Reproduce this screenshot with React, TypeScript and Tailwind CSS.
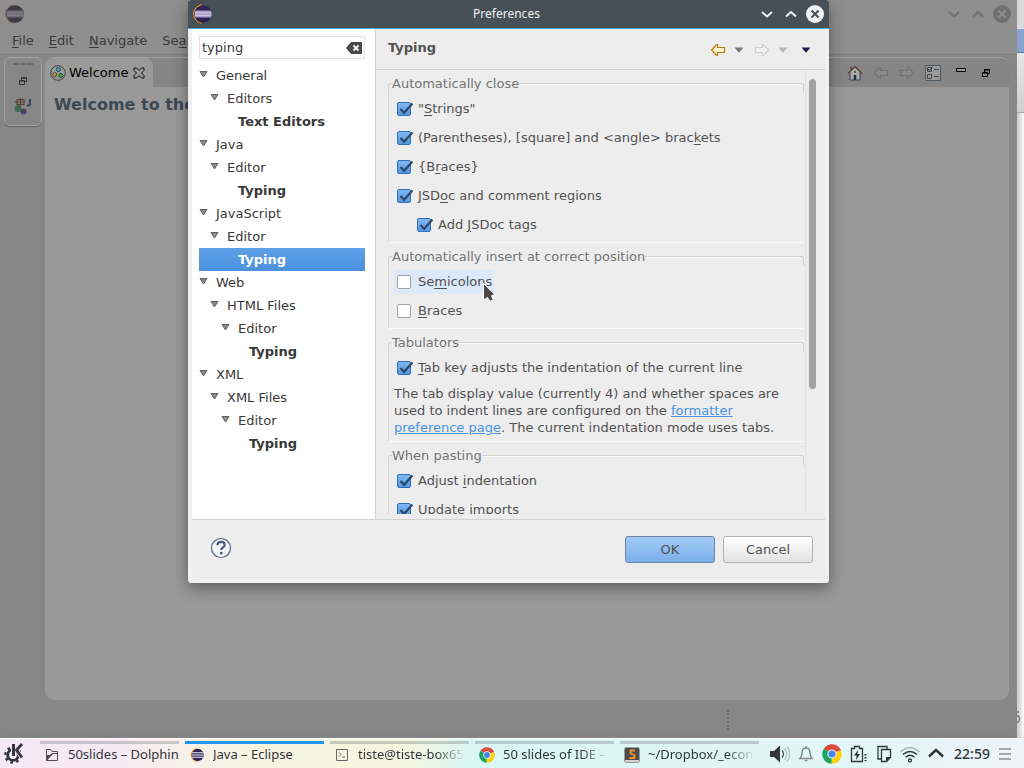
import React, { useState } from "react";

const UI = "font-['DejaVu_Sans',sans-serif]";
const SHELL = "font-['Noto_Sans','Open_Sans',sans-serif]";

function EclipseLogo({ className, small }: { className: string; small?: boolean }) {
  return (
    <svg viewBox="0 0 20 20" className={className} aria-hidden="true">
      <path d="M9.500.8A9.300 9.300 0 0 0 9.500 19.200Q3 16 3 10T9.500.8z" fill="#f7941e" stroke="#f7941e" />
      <circle cx="11" cy="10" r="8.800" fill="#2c2255" />
      {small ? (
        <path d="M3 6.800h16M2.500 10h17M3 13.200h16" stroke="#f3f0f8" strokeWidth="1.500" />
      ) : (
        <g>
          <path d="M3.300 6.500h15.600l.8 3.500-.8 3.500H3.300L2.600 10z" fill="#a79cc8" />
          <path d="M3 8.800h16.500M3 11.300h16.500" stroke="#d5cfe6" strokeWidth="1" />
        </g>
      )}
    </svg>
  );
}

function ChromeLogo({ className }: { className: string }) {
  return (
    <svg viewBox="0 0 20 20" className={className} aria-hidden="true">
      <path d="M10 10L1.800 4.800A9.600 9.600 0 0 1 18.800 6z" fill="#dd4b3e" />
      <path d="M10 10L18.700 6A9.600 9.600 0 0 1 9 19.600z" fill="#fdd20a" />
      <path d="M10 10L9.400 19.600A9.600 9.600 0 0 1 1.800 4.800z" fill="#1da362" />
      <path d="M10 5.600h8.600l.3.900H10z" fill="#b8342a" opacity=".5" />
      <circle cx="10" cy="10" r="4.600" fill="#f4f4f4" />
      <circle cx="10" cy="10" r="3.600" fill="#4385ea" />
    </svg>
  );
}

function WindowButtons({ dim }: { dim?: boolean }) {
  const fg = dim ? "#707070" : "#eff0f1";
  const bg = dim ? "#8f8f8f" : "#475057";
  return (
    <div className="flex items-center gap-1">
      <button type="button" aria-label="Minimize" className="size-5">
        <svg viewBox="0 0 20 20"><path d="M5 8l5 4.500L15 8" fill="none" stroke={fg} strokeWidth="2" /></svg>
      </button>
      <button type="button" aria-label="Maximize" className="size-5">
        <svg viewBox="0 0 20 20"><path d="M5 12.500L10 8l5 4.500" fill="none" stroke={fg} strokeWidth="2" /></svg>
      </button>
      <button type="button" aria-label="Close" className="size-5">
        <svg viewBox="0 0 20 20">
          <circle cx="10" cy="10" r="9" fill={fg} />
          <path d="M6.500 6.500l7 7M13.500 6.500l-7 7" stroke={bg} strokeWidth="2" />
        </svg>
      </button>
    </div>
  );
}

function Arrow({ right, stroke, fill }: { right?: boolean; stroke: string; fill: string }) {
  const d = right
    ? "M1.500 4.500h7v-3h1l5 5.500-5 5.500h-1v-3h-7z"
    : "M14.500 4.500h-7v-3h-1L1.500 7l5 5.500h1v-3h7z";
  return (
    <svg viewBox="0 0 16 14" className="h-3.5 w-4"><path d={d} fill={fill} stroke={stroke} strokeWidth="1.200" /></svg>
  );
}

function Caret({ fill }: { fill: string }) {
  return <svg viewBox="0 0 10 6" className="h-1.5 w-2.5"><path d="M.5.5h9L5 5.800z" fill={fill} /></svg>;
}

function RestoreIcon({ color }: { color: string }) {
  return (
    <svg viewBox="0 0 10 10" className="size-2.5" fill="none" stroke={color} strokeWidth="1">
      <path d="M3.500 4V1.500h5v4H6.500M3 2h6" />
      <path d="M1.500 4.500h5v4h-5zM1 5h6" />
    </svg>
  );
}

const tree: { label: string; level: number; leaf?: boolean; selected?: boolean }[] = [
  { label: "General", level: 0 },
  { label: "Editors", level: 1 },
  { label: "Text Editors", level: 2, leaf: true },
  { label: "Java", level: 0 },
  { label: "Editor", level: 1 },
  { label: "Typing", level: 2, leaf: true },
  { label: "JavaScript", level: 0 },
  { label: "Editor", level: 1 },
  { label: "Typing", level: 2, leaf: true, selected: true },
  { label: "Web", level: 0 },
  { label: "HTML Files", level: 1 },
  { label: "Editor", level: 2 },
  { label: "Typing", level: 3, leaf: true },
  { label: "XML", level: 0 },
  { label: "XML Files", level: 1 },
  { label: "Editor", level: 2 },
  { label: "Typing", level: 3, leaf: true },
];

const indent = ["pl-0", "pl-[11px]", "pl-[22px]", "pl-[33px]"];

function Tree() {
  return (
    <ul className="mt-[5px]" role="tree">
      {tree.map((n, i) => (
        <li
          key={i}
          role="treeitem"
          aria-selected={!!n.selected}
          className={`flex h-[23px] items-center gap-[7px] ${indent[n.level]} ${
            n.selected ? "bg-linear-to-b from-[#5fa1e8] to-[#4b91de] text-white" : "text-[#383838]"
          }`}
        >
          <svg viewBox="0 0 10 8" className="mb-1 h-2 w-2.5 shrink-0">
            {!n.leaf && <path d="M1 1.500h7L4.500 7z" fill="#8c8c8c" stroke="#626262" strokeWidth="1" />}
          </svg>
          <span className={n.leaf ? "font-bold" : ""}>{n.label}</span>
        </li>
      ))}
    </ul>
  );
}

function Check({
  children,
  on,
  nested,
  hover,
}: {
  children: React.ReactNode;
  on?: boolean;
  nested?: boolean;
  hover?: boolean;
}) {
  const [checked, setChecked] = useState(!!on);
  return (
    <div className={`flex h-[29px] items-center ${nested ? "pl-[25px]" : "pl-[5px]"}`}>
      <label className={`flex h-6 items-center gap-[5px] pr-0.5 pl-[3px] whitespace-nowrap ${hover ? "relative bg-[#dce9f9]" : ""}`}>
        <span className="grid size-4">
          <input
            type="checkbox"
            checked={checked}
            onChange={(e) => setChecked(e.target.checked)}
            className="peer [grid-area:1/1] mt-px size-3.5 appearance-none rounded-[2px] border border-[#a3a3a3] bg-white checked:border-[#2f6fb5] checked:bg-linear-to-b checked:from-[#7db7f2] checked:to-[#5597e2]"
          />
          <svg viewBox="0 0 16 16" className="pointer-events-none invisible [grid-area:1/1] peer-checked:visible">
            <path d="M3.500 8l3.600 3.800L15.500 2.500" fill="none" stroke="#2f4662" strokeWidth="2.200" />
          </svg>
        </span>
        <span>{children}</span>
        {hover && (
          <svg viewBox="0 0 14 22" className="absolute top-3 left-[88px] h-[22px] w-3.5">
            <path d="M1.500 1.500v16.500l4-2.500 2.500 4 3.200-1.800-1.700-4L13 12.500z" fill="#4a4a4a" stroke="#fff" strokeWidth="1" />
          </svg>
        )}
      </label>
    </div>
  );
}

function Group({ title, children }: { title: string; children: React.ReactNode }) {
  return (
    <section className="mb-[5px]">
      <div className="flex h-[18px] items-center">
        <span className="mt-2 h-2.5 w-1 shrink-0 rounded-tl-[3px] border-t border-l border-[#d2d2d2]" />
        <h3 className="leading-[18px] whitespace-nowrap text-[#747474]">{title}</h3>
        <span className="mt-2 h-2.5 flex-1 rounded-tr-[3px] border-t border-r border-[#d2d2d2] shadow-[inset_0_1px_0_#fafafa]" />
      </div>
      <div className="border-b border-l border-b-[#fafafa] border-l-[#d6d6d6] pt-px pb-[3px]">{children}</div>
    </section>
  );
}

const U = ({ children }: { children: React.ReactNode }) => (
  <span className="underline underline-offset-2">{children}</span>
);

function Dialog() {
  const [query, setQuery] = useState("typing");
  return (
    <div
      role="dialog"
      aria-label="Preferences"
      className="w-[641px] overflow-hidden rounded-[3px] bg-[#eff0f1] shadow-[0_5px_16px_rgba(0,0,0,0.4)]"
    >
      <header className={`flex h-[29px] items-center border-b border-[#3daee9] bg-[#475057] pr-1 pl-1 ${SHELL}`}>
        <div className="w-16"><EclipseLogo className="size-5" /></div>
        <h1 className="flex-1 text-center text-xs text-[#eff0f1]">Preferences</h1>
        <WindowButtons />
      </header>

      <div className="mx-1 bg-[#ededed]">
        <div className="flex h-[490px]">
          <aside className="w-[184px] border-r border-[#d2d2d2] bg-white px-[7px] pr-2.5 pt-[7px] text-[#383838]">
            <div className="flex h-[23px] items-center border border-[#e0e0e0] pr-0.5 pl-0.5">
              <input
                aria-label="Filter"
                value={query}
                onChange={(e) => setQuery(e.target.value)}
                className="min-w-0 flex-1 bg-transparent outline-none"
              />
              <button type="button" aria-label="Clear" onClick={() => setQuery("")}>
                <svg viewBox="0 0 16 12" className="h-3 w-4">
                  <path d="M0 6l5-6h11v12H5z" fill="#4a4a4a" />
                  <path d="M7.500 3.500l5 5M12.500 3.500l-5 5" stroke="#fff" strokeWidth="1.800" />
                </svg>
              </button>
            </div>
            <Tree />
          </aside>

          <main className="flex min-w-0 flex-1 flex-col text-[#525252]">
            <div className="flex h-[41px] shrink-0 items-center border-b border-[#d2d2d2] pr-3.5 pl-3">
              <h2 className="flex-1 pb-0.5 font-bold">Typing</h2>
              <div className="flex items-center pt-0.5">
                <button type="button" aria-label="Back" className="mr-2"><Arrow stroke="#b9770e" fill="#fff6c9" /></button>
                <button type="button" aria-label="Back history" className="mr-2.5"><Caret fill="#787878" /></button>
                <button type="button" aria-label="Forward" className="mr-2"><Arrow right stroke="#cfcfcf" fill="#f1f1f1" /></button>
                <button type="button" aria-label="Forward history" className="mr-[13px]"><Caret fill="#b5b5b5" /></button>
                <button type="button" aria-label="View menu"><Caret fill="#2a1a4a" /></button>
              </div>
            </div>

            <div className="flex h-[444px] overflow-hidden pr-2 pl-3">
              <div className="min-w-0 flex-1 pt-[5px]">
                <Group title="Automatically close">
                  <Check on>"<U>S</U>trings"</Check>
                  <Check on>(Parentheses), [square] and &lt;angle&gt; brac<U>k</U>ets</Check>
                  <Check on>{"{B"}<U>r</U>{"aces}"}</Check>
                  <Check on>JSD<U>o</U>c and comment regions</Check>
                  <Check on nested>Add <U>J</U>SDoc tags</Check>
                </Group>
                <Group title="Automatically insert at correct position">
                  <Check hover>Se<U>m</U>icolons</Check>
                  <Check><U>B</U>races</Check>
                </Group>
                <Group title="Tabulators">
                  <Check on><U>T</U>ab key adjusts the indentation of the current line</Check>
                  <p className="mt-[3px] mb-0.5 pl-[5px] leading-[17px]">
                    The tab display value (currently 4) and whether spaces are used to indent lines are configured on the{" "}
                    <a href="#formatter" className="text-[#4a93e0] underline underline-offset-1">formatter preference page</a>. The current
                    indentation mode uses tabs.
                  </p>
                </Group>
                <Group title="When pasting">
                  <Check on>Adjust <U>i</U>ndentation</Check>
                  <Check on><U>U</U>pdate imports</Check>
                </Group>
              </div>
              <div className="ml-px w-3 border-l border-[#e2e2e2] pt-[9px] pl-[3px]">
                <div className="h-[310px] w-[7px] rounded-full bg-[#a2a2a2]" />
              </div>
            </div>
          </main>
        </div>

        <footer className="flex h-[60px] items-center border-t border-[#d2d2d2] pr-3 pl-[18px] text-[#525252]">
          <button type="button" aria-label="Help" className="mb-1 size-[22px]">
            <svg viewBox="0 0 22 22">
              <circle cx="11" cy="11" r="9.500" fill="#f3f4f7" stroke="#56648a" strokeWidth="1.200" />
              <path d="M7.500 8.300c0-4.600 7.200-4.200 7.200-.4 0 2.600-3.500 2.500-3.500 5.100" fill="none" stroke="#4b5a84" strokeWidth="2.200" />
              <circle cx="11.200" cy="16.200" r="1.400" fill="#4b5a84" />
            </svg>
          </button>
          <div className="ml-auto flex gap-2">
            <button type="button" className="h-[27px] w-[90px] rounded-[3px] border border-[#6d87a8] bg-linear-to-b from-[#a3cbf6] to-[#79aee9]">OK</button>
            <button type="button" className="h-[27px] w-[90px] rounded-[3px] border border-[#b0b0b0] bg-linear-to-b from-white to-[#e2e2e2]">Cancel</button>
          </div>
        </footer>
      </div>
      <div className="h-1" />
    </div>
  );
}

function Workbench() {
  return (
    <div className="flex flex-1 flex-col rounded-t-[3px] bg-[#8b8b8b] shadow-[inset_0_-3px_3px_#777]">
      <header className="flex h-7 items-center justify-between bg-[#8f8f8f] pr-[5px] pl-1">
        <div className="opacity-70 grayscale-[40%] brightness-60"><EclipseLogo className="size-5" /></div>
        <WindowButtons dim />
      </header>
      <nav className="flex h-[27px] items-center gap-[15px] border-b border-[#7f7f7f] bg-[#8f8f8f] pl-3 text-[#3a3a3a]">
        <a href="#file"><U>F</U>ile</a>
        <a href="#edit"><U>E</U>dit</a>
        <a href="#navigate"><U>N</U>avigate</a>
        <a href="#search">Se<U>a</U>rch</a>
      </nav>

      <div className="flex flex-1 gap-[3px] bg-[#868686]/90 pt-0.5 pr-2 pl-1">
        <aside className="flex h-[69px] w-[38px] flex-col items-center rounded-md border border-[#a5a5a5] bg-[#878787] pt-[5px] shadow-[0_1px_1px_#666]">
          <span className="h-0.5 w-5 border-t-2 border-dashed border-[#666]" />
          <button type="button" aria-label="Restore" className="mt-[11px]"><RestoreIcon color="#333" /></button>
          <button type="button" aria-label="Java browsing" className="mt-3">
            <svg viewBox="0 0 18 17" className="h-[17px] w-[18px]">
              <path d="M3 1.500h7v5H3zM1 4h10M6.500 0v8" fill="none" stroke="#5d4034" strokeWidth="1.200" />
              <path d="M16 1v5q0 2-3 1.500" fill="none" stroke="#33475c" strokeWidth="2" />
              <circle cx="4" cy="10.500" r="3.500" fill="#3c6b4d" />
              <circle cx="9.500" cy="13.500" r="3" fill="#4a4267" />
            </svg>
          </button>
        </aside>

        <main className="mb-[38px] flex flex-1 flex-col overflow-hidden rounded-[9px] border-t border-[#a2a2a2] bg-[#999]">
          <div className="flex h-[29px] items-stretch bg-[#858585]">
            <div className="flex items-center gap-[3px] rounded-tr-lg rounded-tl-lg bg-[#999] pr-2 pl-[5px] text-black">
              <svg viewBox="0 0 16 16" className="size-4">
                <circle cx="8" cy="8" r="7.300" fill="#9b9b9b" stroke="#3c4144" />
                <circle cx="8.500" cy="4.500" r="2.100" fill="#5d96a9" stroke="#24515f" />
                <circle cx="4.700" cy="9.500" r="2.100" fill="#a4955a" stroke="#5f5321" />
                <circle cx="10.800" cy="10.500" r="2.100" fill="#4e9a59" stroke="#1f5d29" />
              </svg>
              <span>Welcome</span>
              <button type="button" aria-label="Close Welcome" className="ml-0.5">
                <svg viewBox="0 0 12 12" className="size-3">
                  <path d="M1 1h2.500L6 3.500 8.500 1H11v2.500L8.500 6 11 8.500V11H8.500L6 8.500 3.500 11H1V8.500L3.500 6 1 3.500z" fill="none" stroke="#111" />
                </svg>
              </button>
            </div>
            <div className="ml-auto flex items-center pr-[18px]">
              <svg viewBox="0 0 16 16" className="mr-2.5 size-4">
                <path d="M3 7v8h10V7L8 2z" fill="#aaa" stroke="#3b4351" />
                <path d="M1 8.500L8 1.500l7 7M4 4.500V1.500" fill="none" stroke="#5d483c" strokeWidth="1.500" />
                <path d="M8 10v5" stroke="#26313d" strokeWidth="2.500" />
                <path d="M7 6h2v2H7z" fill="#40604d" />
              </svg>
              <span className="mr-2.5 opacity-60"><Arrow stroke="#666" fill="#8c8c8c" /></span>
              <span className="mr-2.5 opacity-60"><Arrow right stroke="#666" fill="#8c8c8c" /></span>
              <svg viewBox="0 0 16 16" className="mr-3.5 size-4" fill="none">
                <path d="M.5.500h15v15H.5z" fill="#9a9a9a" stroke="#4d5a65" />
                <path d="M2.500 2.500h4v4h-4zM2.500 9.500h4v4h-4zM9 4.500h5M9 11.500h5M3 4l1.500 1.500 3-4" stroke="#444" />
              </svg>
              <svg viewBox="0 0 12 10" className="mr-3.5 mb-1 h-2.5 w-3"><path d="M1.500 2.500h9v3h-9z" fill="#999" stroke="#000" /></svg>
              <RestoreIcon color="#000" />
            </div>
          </div>
          <h2 className="px-[9px] pt-1.5 text-base font-bold text-[#3d4853]">Welcome to the</h2>
        </main>
      </div>
    </div>
  );
}

function Task({
  title,
  active,
  fade,
  children,
}: {
  title: string;
  active?: boolean;
  fade?: boolean;
  children: React.ReactNode;
}) {
  return (
    <button
      type="button"
      className={`flex h-[26px] w-[139px] items-center gap-2 overflow-hidden border-t-[3px] pl-1 text-left text-[13px] ${
        active ? "border-[#1d99f3]" : "border-[#7f8c8d]/40"
      }`}
    >
      <span className="grid size-4 shrink-0 place-items-center">{children}</span>
      <span
        className={`min-w-0 flex-1 overflow-hidden whitespace-nowrap ${
          fade ? "[mask-image:linear-gradient(to_right,#000_70%,transparent_97%)]" : ""
        }`}
      >
        {title}
      </span>
    </button>
  );
}

function Taskbar() {
  return (
    <footer
      className={`relative flex h-[30px] items-center border-t border-white bg-[linear-gradient(100deg,#f6e8f7_0%,#f7ebf3_12%,#f7f5e2_24%,#f5f6e0_40%,#d9f6f5_46%,#e2f6f6_85%,#eff3fa_100%)] text-[#31363b] ${SHELL}`}
    >
      <button type="button" aria-label="Application launcher" className="ml-1 w-9">
        <svg viewBox="0 0 21 21" className="size-[21px]">
          <circle cx="9" cy="12" r="7.600" fill="none" stroke="#31363b" strokeWidth="2.500" strokeDasharray="2.600 3.370" />
          <circle cx="9" cy="12" r="5.300" fill="none" stroke="#31363b" strokeWidth="2.800" />
          <path d="M7 0h5v6l4-6h5l-5.500 7.500L21 16h-5l-4-6.500V14H7z" fill="#f6e8f7" />
          <path d="M9.500 1v12" stroke="#31363b" strokeWidth="3" />
          <path d="M18 1l-5.500 6 5.500 7.500" fill="none" stroke="#31363b" strokeWidth="2.800" />
        </svg>
      </button>
      <div className="flex gap-1.5">
        <Task title="50slides – Dolphin">
          <svg viewBox="0 0 14 14" className="size-3.5">
            <path d="M1.500 12.500v-11h4l1.500 2h5.500v9z" fill="none" stroke="#4d4d4d" />
            <path d="M1 12.500V7h4l2-2h6v1H8L2 12.500z" fill="#4d4d4d" />
          </svg>
        </Task>
        <Task title="Java – Eclipse" active><EclipseLogo small className="size-3.5" /></Task>
        <Task title="tiste@tiste-box65" fade>
          <svg viewBox="0 0 14 14" className="size-3.5" fill="none" stroke="#666">
            <path d="M1.500 1.500h11v11h-11zM4 4.500L6 6.500 4 8.500M7 9h3" />
          </svg>
        </Task>
        <Task title="50 slides of IDE – G" fade><ChromeLogo className="size-4" /></Task>
        <Task title="~/Dropbox/_econ–" fade>
          <svg viewBox="0 0 16 16" className="size-4">
            <rect x="0.500" y="0.500" width="15" height="15" rx="2" fill="#4b4b4b" stroke="#999" />
            <path d="M1 13h14v2H1z" fill="#d0d0d0" />
            <path d="M11 3.500H6.500v3L10.500 8v3H5.500" fill="none" stroke="#f59331" strokeWidth="1.800" />
          </svg>
        </Task>
      </div>
      <div className="ml-auto flex items-center gap-1.5 pr-3">
        <svg viewBox="0 0 20 20" className="size-5">
          <path d="M0 7h4l6-5.500v17L4 13H0z" fill="#31363b" />
          <path d="M12 6.500q3 3.500 0 7" fill="none" stroke="#4f5559" strokeWidth="1.300" />
          <path d="M14.500 4.500q4.500 5.500 0 11M17 2.500q5.500 7.500 0 15" fill="none" stroke="#b7c1c3" strokeWidth="1.300" />
        </svg>
        <svg viewBox="0 0 20 20" className="size-5" fill="none" stroke="#85898b" strokeWidth="1.500">
          <path d="M4 14.500h12c-1.500-2-2-3-2-5.500 0-3-1.500-5-4-5s-4 2-4 5c0 2.500-.5 3.500-2 5.500zM10 4V2" />
          <path d="M8.500 16.500h3" />
        </svg>
        <ChromeLogo className="size-5" />
        <svg viewBox="0 0 20 20" className="size-5">
          <path d="M3.500 4.500h3v-2h5v2h3v13h-11z" fill="none" stroke="#31363b" strokeWidth="1.300" />
          <path d="M10 6l-4 5.500h2.500L8 16l4-6H9.500z" fill="#31363b" />
          <path d="M17.500 10v7" stroke="#31363b" strokeWidth="2" strokeDasharray="1.500 1.500" />
        </svg>
        <svg viewBox="0 0 20 20" className="size-5" fill="none" stroke="#31363b" strokeWidth="1.300">
          <path d="M7 15H4V2.500h9V5" />
          <path d="M7.500 5.500h9v8l-4 4h-5z" />
          <path d="M12 18v-5h5z" fill="#31363b" stroke="none" />
        </svg>
        <svg viewBox="0 0 20 20" className="size-5" fill="none" strokeWidth="1.300">
          <path d="M.5 8q9.500-8.500 19 0" stroke="#a9b3b5" />
          <path d="M3 10.500q7-6 14 0M5.500 13.200q4.500-4 9 0" stroke="#31363b" />
          <circle cx="10" cy="16.500" r="1.500" stroke="#31363b" />
        </svg>
        <svg viewBox="0 0 20 20" className="size-5"><path d="M3 12.500L10 6l7 6.500" fill="none" stroke="#31363b" strokeWidth="2.500" /></svg>
        <time className="w-10 text-center text-[14px] font-medium">22:59</time>
        <svg viewBox="0 0 14 14" className="size-3.5"><path d="M1 2h12M1 7h12M1 12h12" stroke="#8a9092" strokeWidth="1.500" /></svg>
      </div>
    </footer>
  );
}

export default function App() {
  return (
    <div className={`flex min-h-screen flex-col bg-white text-[13px] ${UI}`}>
      <div className="flex flex-1">
        <div className="relative flex flex-1 flex-col">
          <Workbench />
          <div className="absolute inset-x-0 top-0 flex justify-center">
            <Dialog />
          </div>
          <div className="absolute right-[288px] bottom-2 h-5 border-l-2 border-dotted border-[#6e6e6e]" />
        </div>
        <div className="flex w-[7px] flex-col overflow-hidden bg-white text-[#777] shadow-[inset_4px_0_4px_rgba(0,0,0,0.2)]">
          <div className="h-[29px] bg-[#d9dadb]" />
          <div className="h-6 border-b border-[#5c78a8] bg-[#88a4cf]" />
          <div className="h-[60px] border-b border-[#aaa] bg-linear-to-b from-[#e8e8e8] to-[#cfcfcf]" />
          <svg viewBox="0 0 7 14" className="mt-auto mb-3.5 h-3.5 w-[7px]">
            <path d="M0 2h2M0 6q3 0 2.500 3.500T0 12" fill="none" stroke="#777" strokeWidth="1.300" />
          </svg>
        </div>
      </div>
      <Taskbar />
    </div>
  );
}
